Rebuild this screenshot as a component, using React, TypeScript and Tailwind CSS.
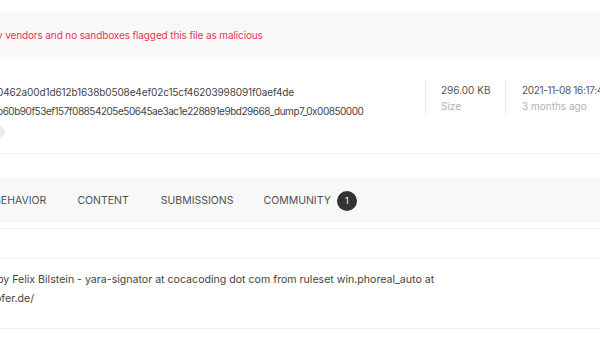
import React from "react";

export default function App() {
  const font = { fontFamily: "Inter, 'Noto Sans', sans-serif" };
  return (
    <div className="w-[600px] h-[340px] overflow-hidden bg-white text-[#444]" style={font}>
      <div className="h-[13px]" />
      <div className="h-[44px] bg-[#f8f8f9] flex items-center">
        <span className="-ml-[3px] text-[10px] text-[#e6345c] whitespace-nowrap tracking-[-0.12px]">
          y vendors and no sandboxes flagged this file as malicious
        </span>
      </div>
      <div className="h-[97px] border-b border-[#efeff1] flex">
        <div className="w-[425px] shrink-0 flex flex-col pt-[26px]">
          <div className="-ml-[3px] text-[10px] leading-[19px] whitespace-nowrap tracking-[-0.12px]">
            0462a00d1d612b1638b0508e4ef02c15cf46203998091f0aef4de
          </div>
          <div className="-ml-[3px] text-[10px] leading-[19px] whitespace-nowrap tracking-[-0.48px]">
            b60b90f53ef157f08854205e50645ae3ac1e228891e9bd29668_dump7_0x00850000
          </div>
          <div className="mt-[4px] -ml-[8px] w-[13px] h-[13px] rounded-full bg-[#ececee]" />
        </div>
        <div className="pt-[23px] shrink-0">
          <div className="h-[35px] border-l border-[#ececee] pl-[15px] w-[80px] pt-[2px]">
            <div className="text-[10px] leading-[16px] text-[#555] whitespace-nowrap">296.00 KB</div>
            <div className="text-[10px] leading-[16px] text-[#b0b0b4]">Size</div>
          </div>
        </div>
        <div className="pt-[23px] shrink-0">
          <div className="h-[35px] border-l border-[#ececee] pl-[16px] pt-[2px]">
            <div className="text-[10px] leading-[16px] text-[#555] whitespace-nowrap tracking-[-0.35px]">2021-11-08 16:17:45 UTC</div>
            <div className="text-[10px] leading-[16px] text-[#b0b0b4] whitespace-nowrap">3 months ago</div>
          </div>
        </div>
      </div>
      <div className="h-[24px]" />
      <div className="h-[45px] bg-[#f8f8f9] flex items-center text-[10.5px] text-[#505050] uppercase whitespace-nowrap">
        <span className="-ml-[6px]">Behavior</span>
        <span className="ml-[31px]">Content</span>
        <span className="ml-[32px]">Submissions</span>
        <span className="ml-[30px]">Community</span>
        <span className="ml-[6px] w-[20px] h-[20px] rounded-full bg-[#333] text-white text-[9px] flex items-center justify-center">1</span>
      </div>
      <div className="h-[5px]" />
      <div className="h-[30px] border-t border-[#efeff1]" />
      <div className="border-t border-[#efeff1] h-[70px] pt-[11px]">
        <div className="-ml-[3px] text-[10.6px] leading-[19px] whitespace-nowrap">
          by Felix Bilstein - yara-signator at cocacoding dot com from ruleset win.phoreal_auto at
        </div>
        <div className="-ml-[5px] text-[10.6px] leading-[19px] whitespace-nowrap">ofer.de/</div>
      </div>
      <div className="border-t border-[#efeff1]" />
    </div>
  );
}
